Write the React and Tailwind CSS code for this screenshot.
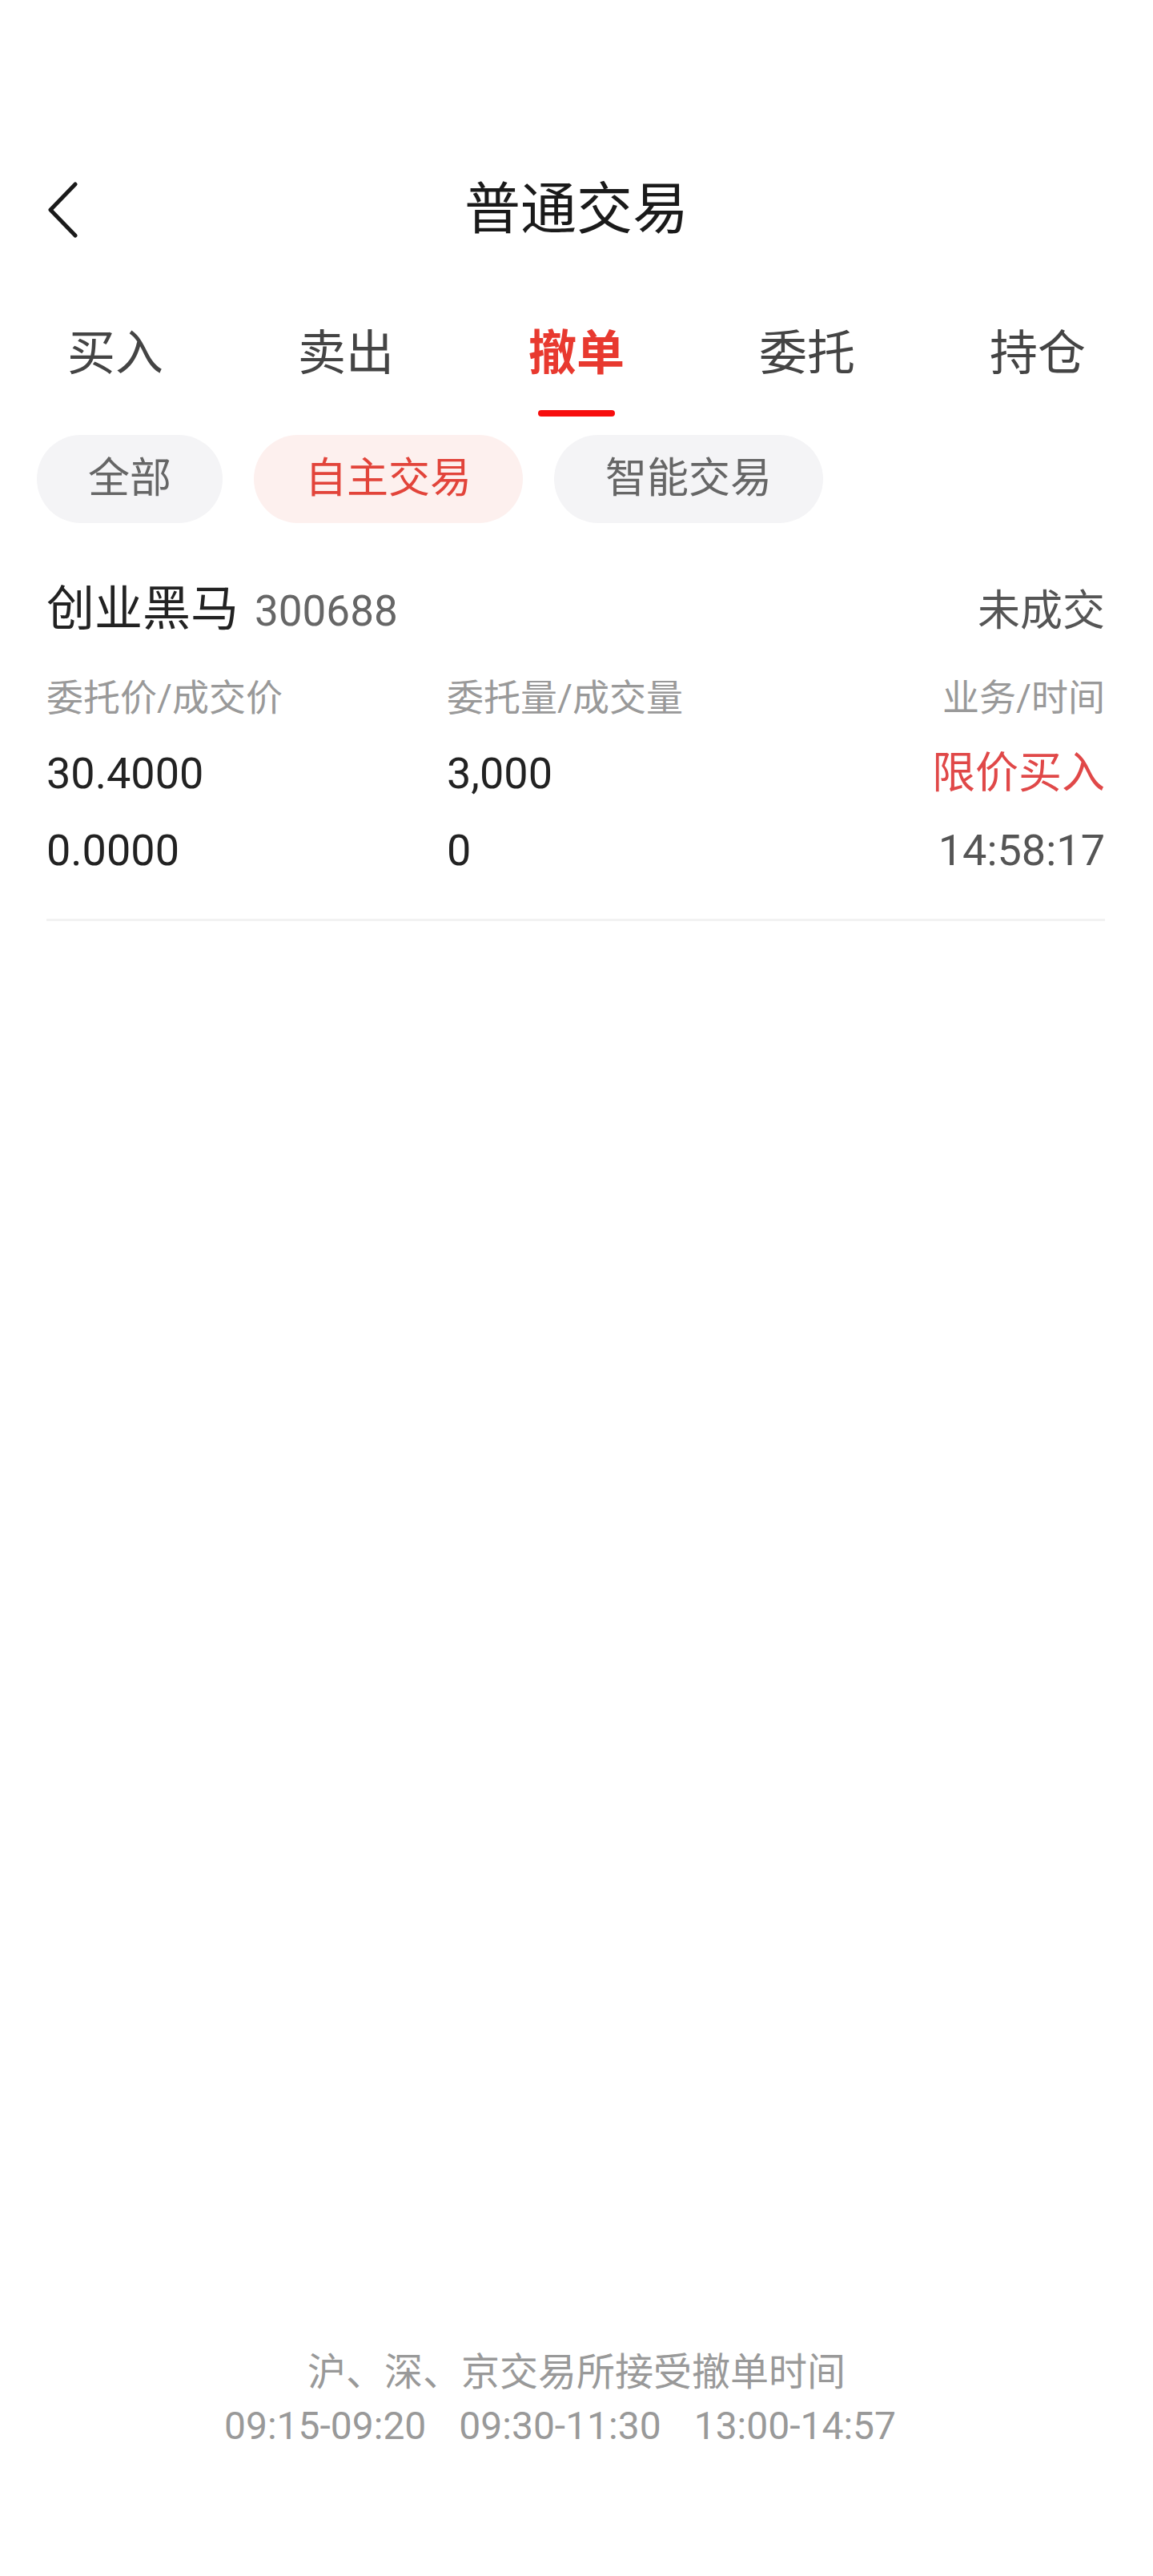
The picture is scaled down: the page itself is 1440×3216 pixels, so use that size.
export default function App() {
  const tabs = ["买入", "卖出", "撤单", "委托", "持仓"];
  const chips = ["全部", "自主交易", "智能交易"];

  return (
    <div
      className="w-[1440px] h-[3216px] bg-white flex flex-col"
      style={{ fontFamily: 'Roboto, "Noto Sans CJK SC", sans-serif' }}
    >
      {/* header */}
      <div className="mt-[180px] h-[164px] grid grid-cols-[1fr_auto_1fr] items-center">
        <div className="pl-[58px] flex items-center">
          <svg width="42" height="70" viewBox="0 0 42 70" fill="none">
            <polyline points="36,3 5,35 36,67" stroke="#1a1a1a" strokeWidth="5" strokeLinecap="round" strokeLinejoin="round" />
          </svg>
        </div>
        <div className="text-[70px] leading-none text-[#1a1a1a]">普通交易</div>
        <div />
      </div>

      {/* tabs */}
      <div className="grid grid-cols-5 h-[180px]">
        {tabs.map((t, i) => (
          <div key={t} className="flex flex-col items-center pt-[68px]">
            <span
              className={
                i === 2
                  ? "text-[60px] leading-[60px] font-bold text-[#e8392f]"
                  : "text-[60px] leading-[60px] text-[#444]"
              }
            >
              {t}
            </span>
            {i === 2 && <div className="mt-[40px] w-[96px] h-[8px] rounded-full bg-[#f70d0d]" />}
          </div>
        ))}
      </div>

      {/* filter chips */}
      <div className="mt-[19px] pl-[46px] flex gap-[39px]">
        {chips.map((c, i) => (
          <div
            key={c}
            className={
              i === 1
                ? "h-[110px] px-[64px] rounded-full bg-[#fdf0ee] text-[#e2443a] text-[52px] flex items-center"
                : "h-[110px] px-[64px] rounded-full bg-[#f4f4f6] text-[#666] text-[52px] flex items-center"
            }
          >
            {c}
          </div>
        ))}
      </div>

      {/* order card */}
      <div className="pl-[58px] pr-[60px] mt-[81px]">
        <div className="flex items-center justify-between h-[60px]">
          <div className="flex items-baseline">
            <span className="text-[60px] leading-[60px] text-[#222]">创业黑马</span>
            <span className="ml-[20px] text-[53px] text-[#666]">300688</span>
          </div>
          <span className="text-[53px] text-[#555]">未成交</span>
        </div>

        <div className="mt-[54px] grid grid-cols-[500px_1fr_auto] text-[46px] leading-[46px] text-[#999]">
          <span>委托价/成交价</span>
          <span>委托量/成交量</span>
          <span className="text-right">业务/时间</span>
        </div>

        <div className="mt-[45px] grid grid-cols-[500px_1fr_auto] text-[54px] leading-[54px] text-[#222]">
          <span>30.4000</span>
          <span>3,000</span>
          <span className="text-right text-[#e04848]">限价买入</span>
        </div>

        <div className="mt-[42px] grid grid-cols-[500px_1fr_auto] text-[54px] leading-[54px] text-[#222]">
          <span>0.0000</span>
          <span>0</span>
          <span className="text-right text-[#555]">14:58:17</span>
        </div>

        <div className="mt-[58px] h-[3px] bg-[#f2f2f2]" />
      </div>

      <div className="flex-1" />

      {/* footer */}
      <div className="pb-[154px] flex flex-col items-center text-[#999]">
        <div className="text-[48px] leading-[67px]">沪、深、京交易所接受撤单时间</div>
        <div className="flex gap-[41px] pr-[41px] text-[48px] leading-[67px]">
          <span>09:15-09:20</span>
          <span>09:30-11:30</span>
          <span>13:00-14:57</span>
        </div>
      </div>
    </div>
  );
}
